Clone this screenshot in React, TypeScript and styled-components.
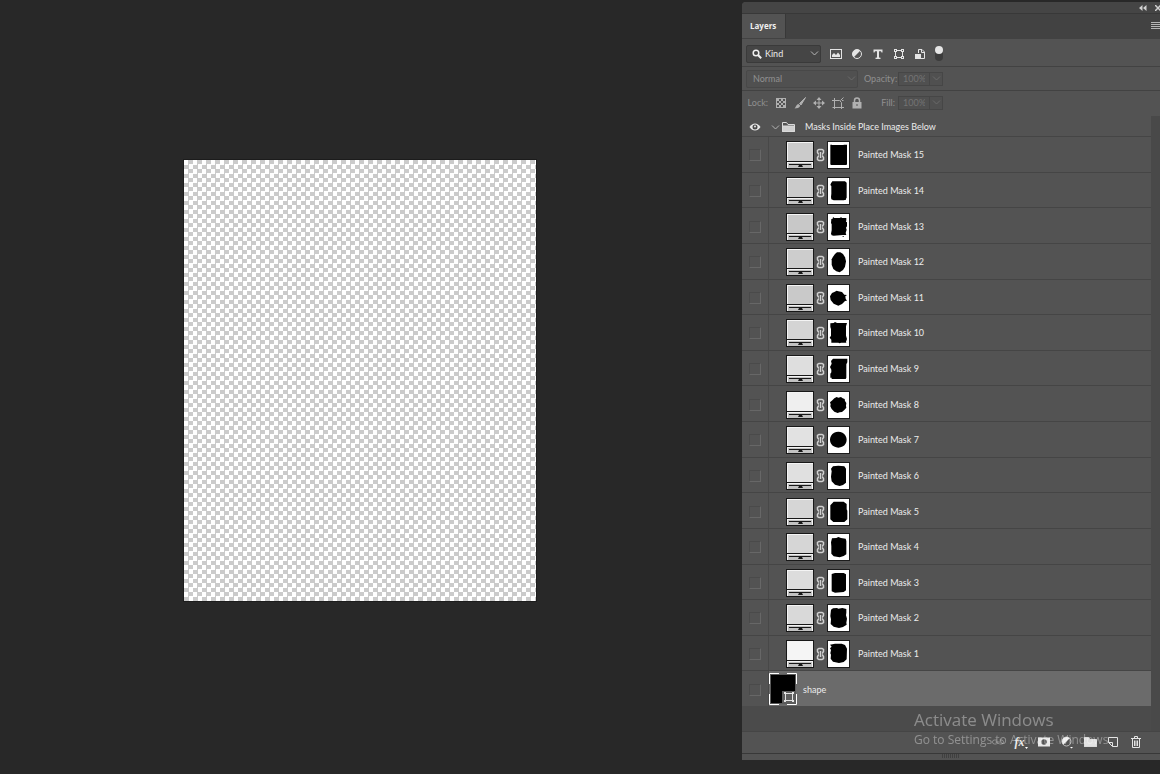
import React from "react";
import styled, { createGlobalStyle } from "styled-components";

const GlobalStyle = createGlobalStyle`
  * { box-sizing: border-box; }
  body {
    margin: 0;
    background: #282828;
    color: #ececec;
    font-family: Lato, "Open Sans", sans-serif;
    font-size: 9px;
    line-height: 12px;
  }
  button, input, select { font: inherit; color: inherit; margin: 0; }
  svg { display: block; flex: none; }
`;

const Workspace = styled.main`
  display: grid;
  grid-template-columns: minmax(0, 1fr) 418px;
  min-height: 100vh;
  overflow: hidden;
`;

const Stage = styled.section`
  display: flex;
  align-items: center;
  justify-content: center;
  padding: 0 22px 13px 0;
`;

const Artboard = styled.div`
  width: 49%;
  aspect-ratio: 4 / 5;
  max-width: 353px;
  box-shadow: 0 0 0 1px #1c1c1c;
  background: conic-gradient(#cbcbcb 25%, #fff 0 50%, #cbcbcb 0 75%, #fff 0) 0 0 / 9px 9px;
`;

const Panel = styled.aside`
  display: flex;
  flex-direction: column;
  align-self: start;
  margin-top: 2px;
  border-radius: 4px 0 0 0;
  background: #535353;
  overflow: hidden;
`;

const PanelHeader = styled.header`
  display: flex;
  justify-content: flex-end;
  align-items: center;
  gap: 8px;
  height: 12px;
  background: #454545;
  border-bottom: 1px solid #383838;
`;

const TabBar = styled.div`
  display: flex;
  justify-content: space-between;
  align-items: center;
  height: 24px;
  background: #424242;
`;

const Tab = styled.button`
  height: 24px;
  padding: 0 9px 0 8px;
  border: 0;
  border-right: 1px solid #383838;
  background: #535353;
  color: #f0f0f0;
  font-family: "Open Sans", sans-serif;
  font-weight: 700;
  font-size: 8px;
`;

const IconButton = styled.button<{ $w?: number }>`
  display: flex;
  align-items: center;
  justify-content: center;
  width: ${(p) => p.$w ?? 14}px;
  height: 16px;
  padding: 0;
  border: 0;
  background: none;
  flex: none;
`;

const ToolRow = styled.div<{ $h: number; $dim?: boolean; $top?: number; $bottom?: number }>`
  display: flex;
  align-items: center;
  height: ${(p) => p.$h}px;
  padding: ${(p) => p.$top ?? 0}px 0 ${(p) => p.$bottom ?? 0}px 4px;
  border-top: 1px solid #424242;
  color: ${(p) => (p.$dim ? "#909090" : "#ececec")};
`;

const LockLabel = styled.span`
  width: 22px;
  text-align: right;
`;

const SelectBox = styled.div<{ $w: number; $dim?: boolean }>`
  position: relative;
  width: ${(p) => p.$w}px;
  select {
    display: block;
    appearance: none;
    width: 100%;
    height: 18px;
    padding: 0 16px 0 ${(p) => (p.$dim ? 6 : 18)}px;
    border: 1px solid ${(p) => (p.$dim ? "#484848" : "#3a3a3a")};
    border-radius: 2px;
    background: ${(p) => (p.$dim ? "#505050" : "#454545")};
    opacity: 1;
  }
`;

const Adornment = styled.span<{ $side: "left" | "right" }>`
  position: absolute;
  top: 4px;
  ${(p) => p.$side}: ${(p) => (p.$side === "left" ? 6 : 2)}px;
  pointer-events: none;
`;

const IconSet = styled.div<{ $gap: number; $left: number }>`
  display: flex;
  align-items: center;
  gap: ${(p) => p.$gap}px;
  margin-left: ${(p) => p.$left}px;
`;

const Amount = styled.label<{ $left: number }>`
  display: flex;
  align-items: center;
  gap: 3px;
  margin-left: ${(p) => p.$left}px;
  span {
    width: 31px;
    text-align: right;
  }
  input {
    width: 32px;
    height: 14px;
    padding: 0 4px;
    border: 1px solid #464646;
    background: #505050;
    color: #747474;
  }
`;

const Stepper = styled.button`
  display: flex;
  align-items: center;
  justify-content: center;
  width: 13px;
  height: 14px;
  padding: 0;
  border: 1px solid #464646;
  border-left: 0;
  background: #505050;
`;

const LayerArea = styled.div`
  display: grid;
  grid-template-columns: minmax(0, 1fr) 9px;
  height: 615px;
`;

const LayerColumn = styled.div`
  display: flex;
  flex-direction: column;
`;

const ScrollTrack = styled.div`
  background: #494949;
`;

const GroupRow = styled.div`
  display: flex;
  align-items: center;
  height: 20px;
  padding: 2px 0 0 7px;
`;

const GroupName = styled.span`
  margin-left: 10px;
`;

const LayerList = styled.ul`
  display: grid;
  grid-template-rows: repeat(16, 1fr);
  height: 570px;
  margin: 0;
  padding: 0;
  list-style: none;
`;

const LayerRow = styled.li<{ $selected?: boolean }>`
  display: flex;
  align-items: center;
  border-top: 1px solid #454545;
  background: ${(p) => (p.$selected ? "#6b6b6b" : "#535353")};
  > div, > label { padding-top: 2px; }
`;

const VisibilityCell = styled.div`
  display: flex;
  align-items: center;
  align-self: stretch;
  width: 27px;
  padding-left: 7px;
  border-right: 1px solid #484848;
  background: #535353;
`;

const Visibility = styled.input`
  appearance: none;
  width: 12px;
  height: 12px;
  margin: 0;
  border: 1px solid;
  border-color: #4a4a4a #676767 #676767 #4a4a4a;
`;

const Thumbs = styled.div`
  display: flex;
  align-items: center;
  gap: 2px;
  padding-left: 17px;
`;

const LayerName = styled.label<{ $left: number }>`
  margin-left: ${(p) => p.$left}px;
`;

const EmptyArea = styled.div`
  flex: 1;
  background: #4b4b4b;
`;

const Footer = styled.footer`
  display: flex;
  align-items: center;
  justify-content: flex-end;
  gap: 7px;
  height: 22px;
  padding: 0 16px 2px 0;
  border-top: 1px solid #454545;
`;

const ResizeStrip = styled.div`
  display: flex;
  justify-content: center;
  height: 7px;
  border-top: 1px solid #383838;
`;

const Grip = styled.span`
  width: 18px;
  height: 4px;
  background: repeating-linear-gradient(90deg, #404040 0 1px, #535353 1px 2px);
`;

const Watermark = styled.div`
  position: fixed;
  right: 42px;
  bottom: 25px;
  width: 204px;
  color: rgba(255, 255, 255, 0.36);
  font-family: "Open Sans", sans-serif;
  font-size: 12px;
  line-height: 18px;
  white-space: nowrap;
  pointer-events: none;
  strong {
    display: block;
    font-weight: 400;
    font-size: 17px;
    line-height: 22px;
  }
`;

const Chevron = ({ color }: { color: string }) => (
  <svg width="9" height="9" viewBox="0 0 9 9" fill="none" stroke={color}>
    <path d="M1 2.500 4.500 6 8 2.500" />
  </svg>
);

const icon = (children: React.ReactNode, size = 14) => (
  <svg width={size} height={size} viewBox="0 0 14 14" fill="none" stroke="none">
    {children}
  </svg>
);

const LIGHT = "#e4e4e4";
const MID = "#b0b0b0";

const filterIcons = [
  { name: "Pixel layers", art: icon(<><rect x="1.500" y="2.500" width="11" height="9" stroke={LIGHT} /><path d="M3 10V8L5 6 7 8 9 5.500 11 8V10Z" fill={LIGHT} /></>) },
  { name: "Adjustment layers", art: icon(<><circle cx="7" cy="7" r="4.500" stroke={LIGHT} /><path d="M10.200 3.800A4.500 4.500 0 0 0 3.800 10.200Z" fill={LIGHT} /></>) },
  { name: "Type layers", art: icon(<path d="M2.500 2.500H11.500V5.500H10.500L10 4.300H8V10.500L9.500 10.700V12H4.500V10.700L6 10.500V4.300H4L3.500 5.500H2.500Z" fill={LIGHT} />) },
  { name: "Shape layers", art: icon(<><path d="M3.500 3.500H10.500V10.500H3.500Z" stroke={LIGHT} /><path d="M2 2H5V5H2ZM9 2H12V5H9ZM2 9H5V12H2ZM9 9H12V12H9Z" fill={LIGHT} /><path d="M3 3H4V4H3ZM10 3H11V4H10ZM3 10H4V11H3ZM10 10H11V11H10Z" fill="#535353" /></>) },
  { name: "Smart objects", art: icon(<><path d="M5.500 6V2.500H9L11.500 5V11.500H8M8.500 2.500V5.500H11.500" stroke={LIGHT} /><rect x="2" y="7" width="6" height="5" fill={LIGHT} /></>) },
];

const lockIcons = [
  { name: "Lock transparent pixels", art: icon(<><rect x="2.500" y="2.500" width="9" height="9" stroke={MID} /><path d="M3 3H5V5H3ZM7 3H9V5H7ZM5 5H7V7H5ZM9 5H11V7H9ZM3 7H5V9H3ZM7 7H9V9H7ZM5 9H7V11H5ZM9 9H11V11H9Z" fill={MID} /></>) },
  { name: "Lock image pixels", art: icon(<><path d="M12.500 1.500 6.500 7.500 8 9Z" fill={MID} stroke={MID} /><path d="M5.500 8 7.300 9.800C6.500 12 4 12.500 1.500 12.500 3.200 11 3 8.500 5.500 8Z" fill={MID} /></>) },
  { name: "Lock position", art: icon(<path d="M7 1 9.500 4H7.500V6.500H10V4.500L13 7 10 9.500V7.500H7.500V10H9.500L7 13 4.500 10H6.500V7.500H4V9.500L1 7 4 4.500V6.500H6.500V4H4.500Z" fill={MID} />) },
  { name: "Lock artboard nesting", art: icon(<><path d="M3.500 2V13M1 4.500H8.500L10.500 6.500V13M1.500 11.500H13" stroke={MID} /><path d="M9.500 4.500 12.500 1.500M12.500 4.500H11" stroke={MID} /></>) },
  { name: "Lock all", art: icon(<><rect x="2.500" y="6" width="9" height="6.500" fill={MID} /><path d="M4.500 6.500V4.500A2.500 2.500 0 0 1 9.500 4.500V6.500" stroke={MID} strokeWidth="1.500" /><rect x="6.500" y="8" width="1" height="2" fill="#535353" /></>) },
];

const FolderIcon = ({ solid }: { solid?: boolean }) => (
  <svg width="13" height="12" viewBox="0 0 13 12" fill={solid ? "#e2e2e2" : "none"} stroke="#dadada">
    <path d="M.5 10.500V1.500H4.500L6 3.500H12.500V10.500Z" />
    <path d="M.5 5H12.500V10.500H.5Z" fill={solid ? "#e2e2e2" : "#d0d0d0"} />
  </svg>
);

const footerIcons = [
  { name: "Link layers", art: icon(<path d="M5.500 5H3.500A2 2 0 0 0 3.500 9H5.500M8.500 5H10.500A2 2 0 0 1 10.500 9H8.500M4.500 7H9.500" stroke="#8f8f8f" />) },
  { name: "Layer style", art: <FxLabel /> },
  { name: "Add layer mask", art: icon(<path fillRule="evenodd" d="M1 2.500H13V11.500H1ZM7 4.200A2.800 2.800 0 1 0 7 9.800 2.800 2.800 0 0 0 7 4.200Z" fill="#e8e8e8" />) },
  { name: "New adjustment layer", art: icon(<><circle cx="6.500" cy="6.500" r="4.500" stroke="#bdbdbd" /><path d="M9.700 3.300A4.500 4.500 0 0 0 3.300 9.700Z" fill="#eee" /><path d="M10 12H13L11.500 13.500Z" fill="#fff" /></>) },
  { name: "New group", art: <FolderIcon solid /> },
  { name: "New layer", art: icon(<><path d="M2.500 2.500H11.500V11.500H6.500L2.500 7.500Z" stroke={LIGHT} /><path d="M2.500 7.500H6.500V11.500" stroke={LIGHT} /></>) },
  { name: "Delete layer", art: icon(<path d="M2 3.500H12M5.500 3V1.500H8.500V3M3.500 4V12.500H10.500V4M5.500 5.500V11M7 5.500V11M8.500 5.500V11" stroke={LIGHT} />) },
];

const Fx = styled.span`
  display: flex;
  align-items: flex-end;
  color: #e8e8e8;
  font: italic 700 12px/14px "Liberation Serif", serif;
`;

function FxLabel() {
  return (
    <Fx>
      fx
      <svg width="3" height="2" viewBox="0 0 3 2"><path d="M0 0H3L1.500 2Z" fill="#fff" /></svg>
    </Fx>
  );
}

/* Mask outlines share one 69 x 84 drawing grid. */
const layers = [
  { n: 15, fill: "#cbcbcb", d: "M10 11H15V12H50V11H60V70L58 72H12L10 70Z" },
  { n: 14, fill: "#cbcbcb", d: "M12 19 16 13H40L54 13 59 17V62L57 65V68L50 70H20L13 67 12 60 13 50V27L10 24Z" },
  { n: 13, fill: "#c8c8c8", d: "M13 18 17 17 18 12 22 15H38L42 13 46 15H58V22L57 26 60 28V40L57 44 59 50 56 60 58 66H48L20 68 14 67 12 62 14 52V34L12 30ZM47 69H50V72H47Z" },
  { n: 12, fill: "#cdcdcd", d: "M24 18 30 13 40 13 48 18 54 28 57 40 54 56 48 66 38 73 28 70 19 63 14 50 14 34 18 26Z" },
  { n: 11, fill: "#c9c9c9", d: "M15 27 22 24 29 20 34 22 45 24 52 32 60 33 55 37 56 44 60 50 54 51 45 60 34 65 20 59 11 48 9 37Z" },
  { n: 10, fill: "#d4d4d4", d: "M10 13 20 12 24 9 30 12H60L57 22V50L60 60 57 68 58 71H42L38 73 34 71H13L13 62 8 56 12 50V30L10 24Z" },
  { n: 9, fill: "#dedede", d: "M18 11H61V22L58 28V68L56 72H14V68H10V56L13 52V44L9 36 14 26 12 18Z" },
  { n: 8, fill: "#efefef", d: "M22 22 29 18 34 20 42 18 47 22 53 24 54 30 58 36 57 44 58 50 52 57 45 63 38 64 32 66 22 62 14 54 10 46 11 40 9 34 16 28Z" },
  { n: 7, fill: "#e2e2e2", d: "M34 17A25 24 0 1 1 33.900 17Z" },
  { n: 6, fill: "#e0e0e0", d: "M18 13 34 11 52 13 57 20V62L48 69 38 72 24 68 14 58 12 44 14 28 12 20Z" },
  { n: 5, fill: "#d6d6d6", d: "M20 11H50L59 18V34L61 38V64L52 72H19L10 64V22Z" },
  { n: 4, fill: "#d6d6d6", d: "M15 16 28 15 34 12 42 15 56 17 58 24V64L50 69 38 73 20 70 13 62V44L13 40 12 28Z" },
  { n: 3, fill: "#dcdcdc", d: "M14 15 24 12H50L57 16V64L50 69 24 71 14 67Z" },
  { n: 2, fill: "#d9d9d9", d: "M12 17 18 13 30 12 34 14 46 12 58 15V26L57 34 60 44 58 56 59 62 48 69 36 72 20 68 11 60 12 46 10 36Z" },
  { n: 1, fill: "#f5f5f5", d: "M9 14 24 11H44L54 15 60 26 59 58 50 66 36 69 18 65 11 56 12 44 10 40 12 30 9 25 14 20Z" },
];

const Swatch = ({ fill }: { fill: string }) => (
  <svg width="28" height="28" viewBox="0 0 28 28">
    <rect width="28" height="28" fill="#181818" />
    <rect x="1" y="1" width="26" height="26" fill="#f4f4f4" />
    <rect x="2" y="2" width="25" height="18" fill={fill} />
    <rect x="1" y="20" width="26" height="1" fill="#181818" />
    <rect x="2" y="22" width="24" height="5" fill="#c2c2c2" />
    <path d="M3 23H25V24H16L17 26H12L13 24H3Z" fill="#181818" />
  </svg>
);

const ChainIcon = () => (
  <svg width="9" height="14" viewBox="0 0 9 14" fill="none" stroke="#d0d0d0">
    <path d="M3 6H2.500L1.500 4.500V2.500L3 1.500H6L7.500 2.500V4.500L6.500 6H6M3 8H2.500L1.500 9.500V11.500L3 12.500H6L7.500 11.500V9.500L6.500 8H6M4.500 4V10" strokeWidth="1.500" />
  </svg>
);

const MaskThumb = ({ d }: { d: string }) => (
  <svg width="23" height="28" viewBox="0 0 69 84">
    <rect width="69" height="84" fill="#1c1c1c" />
    <rect x="3" y="3" width="63" height="78" fill="#fff" />
    <path d={d} fill="#000" />
  </svg>
);

const ShapeThumb = () => (
  <svg width="28" height="32" viewBox="0 0 28 32">
    <rect x="1" y="1" width="26" height="30" fill="#5a5a5a" />
    <rect x="2" y="2" width="24" height="28" fill="#000" />
    <path d="M.5 11V.5H10M18 .5H27.500V11M27.500 21V31.500H18M10 31.500H.5V21" fill="none" stroke="#fff" />
    <rect x="13" y="18" width="13" height="12" fill="#5e5e5e" />
    <path d="M16.500 20.500H23.500V27.500H16.500Z" fill="none" stroke="#e4e4e4" />
    <path d="M15 19H17V21H15ZM23 19H25V21H23ZM15 27H17V29H15ZM23 27H25V29H23Z" fill="#e4e4e4" />
  </svg>
);

export default function App() {
  return (
    <>
      <GlobalStyle />
      <Workspace>
        <Stage>
          <Artboard />
        </Stage>
        <Panel>
          <PanelHeader>
            <IconButton $w={8} aria-label="Collapse panel">
              <svg width="8" height="6" viewBox="0 0 8 6" fill="#d0d0d0"><path d="M3.500 0V6L0 3ZM7.500 0V6L4 3Z" /></svg>
            </IconButton>
            <IconButton $w={5} aria-label="Close panel">
              <svg width="5" height="6" viewBox="0 0 5 6" stroke="#d0d0d0" strokeWidth="1.500"><path d="M0 0 6 6M6 0 0 6" /></svg>
            </IconButton>
          </PanelHeader>
          <TabBar>
            <Tab>Layers</Tab>
            <IconButton $w={9} aria-label="Panel menu">
              <svg width="9" height="8" viewBox="0 0 9 8" fill="#b4b4b4"><path d="M0 0H9V1H0ZM0 2H9V3H0ZM0 4H9V5H0ZM0 6H9V7H0Z" /></svg>
            </IconButton>
          </TabBar>
          <ToolRow $h={28} $top={3}>
            <SelectBox $w={75}>
              <select aria-label="Filter type"><option>Kind</option></select>
              <Adornment $side="left">
                <svg width="10" height="10" viewBox="0 0 10 10" fill="none" stroke="#f0f0f0" strokeWidth="1.500"><circle cx="4" cy="4" r="2.800" /><path d="M6 6 9.200 9.200" strokeWidth="2" /></svg>
              </Adornment>
              <Adornment $side="right"><Chevron color="#b8b8b8" /></Adornment>
            </SelectBox>
            <IconSet $gap={7} $left={8}>
              {filterIcons.map((i) => (
                <IconButton key={i.name} aria-label={i.name}>{i.art}</IconButton>
              ))}
              <IconButton $w={10} aria-label="Toggle layer filtering">
                <svg width="10" height="16" viewBox="0 0 10 16">
                  <rect x="1" y="1" width="8" height="14" rx="4" fill="#3c3c3c" />
                  <circle cx="5" cy="4" r="4" fill="#e6e6e6" />
                </svg>
              </IconButton>
            </IconSet>
          </ToolRow>
          <ToolRow $h={24} $dim>
            <SelectBox $w={112} $dim>
              <select aria-label="Blend mode" disabled><option>Normal</option></select>
              <Adornment $side="right"><Chevron color="#6a6a6a" /></Adornment>
            </SelectBox>
            <Amount $left={6}>
              <span>Opacity:</span>
              <input defaultValue="100%" disabled />
            </Amount>
            <Stepper aria-label="Opacity slider" disabled><Chevron color="#6a6a6a" /></Stepper>
          </ToolRow>
          <ToolRow $h={26} $dim $bottom={2}>
            <LockLabel>Lock:</LockLabel>
            <IconSet $gap={5} $left={6}>
              {lockIcons.map((i) => (
                <IconButton key={i.name} aria-label={i.name}>{i.art}</IconButton>
              ))}
            </IconSet>
            <Amount $left={0}>
              <span>Fill:</span>
              <input defaultValue="100%" disabled />
            </Amount>
            <Stepper aria-label="Fill slider" disabled><Chevron color="#6a6a6a" /></Stepper>
          </ToolRow>
          <LayerArea>
            <LayerColumn>
              <GroupRow>
                <IconButton $w={12} aria-label="Toggle group visibility">
                  <svg width="12" height="8" viewBox="0 0 11 8"><path d="M0 4C3-.8 8-.8 11 4 8 8.800 3 8.800 0 4Z" fill="#e8e8e8" /><circle cx="5.500" cy="4" r="2.500" fill="#4a4a4a" /><circle cx="5.500" cy="3.500" r="1" fill="#e8e8e8" /></svg>
                </IconButton>
                <IconSet $gap={2} $left={10}>
                  <IconButton $w={9} aria-label="Collapse group"><Chevron color="#b4b4b4" /></IconButton>
                  <FolderIcon />
                </IconSet>
                <GroupName>Masks Inside Place Images Below</GroupName>
              </GroupRow>
              <LayerList>
                {layers.map((l) => (
                  <LayerRow key={l.n}>
                    <VisibilityCell><Visibility type="checkbox" id={`mask-${l.n}`} /></VisibilityCell>
                    <Thumbs>
                      <Swatch fill={l.fill} />
                      <ChainIcon />
                      <MaskThumb d={l.d} />
                    </Thumbs>
                    <LayerName $left={8} htmlFor={`mask-${l.n}`}>Painted Mask {l.n}</LayerName>
                  </LayerRow>
                ))}
                <LayerRow $selected>
                  <VisibilityCell><Visibility type="checkbox" id="shape" /></VisibilityCell>
                  <ShapeThumb />
                  <LayerName $left={6} htmlFor="shape">shape</LayerName>
                </LayerRow>
              </LayerList>
              <EmptyArea />
            </LayerColumn>
            <ScrollTrack />
          </LayerArea>
          <Footer>
            {footerIcons.map((i) => (
              <IconButton key={i.name} $w={16} aria-label={i.name}>{i.art}</IconButton>
            ))}
          </Footer>
          <ResizeStrip><Grip /></ResizeStrip>
        </Panel>
      </Workspace>
      <Watermark>
        <strong>Activate Windows</strong>
        Go to Settings to Activate Windows.
      </Watermark>
    </>
  );
}
